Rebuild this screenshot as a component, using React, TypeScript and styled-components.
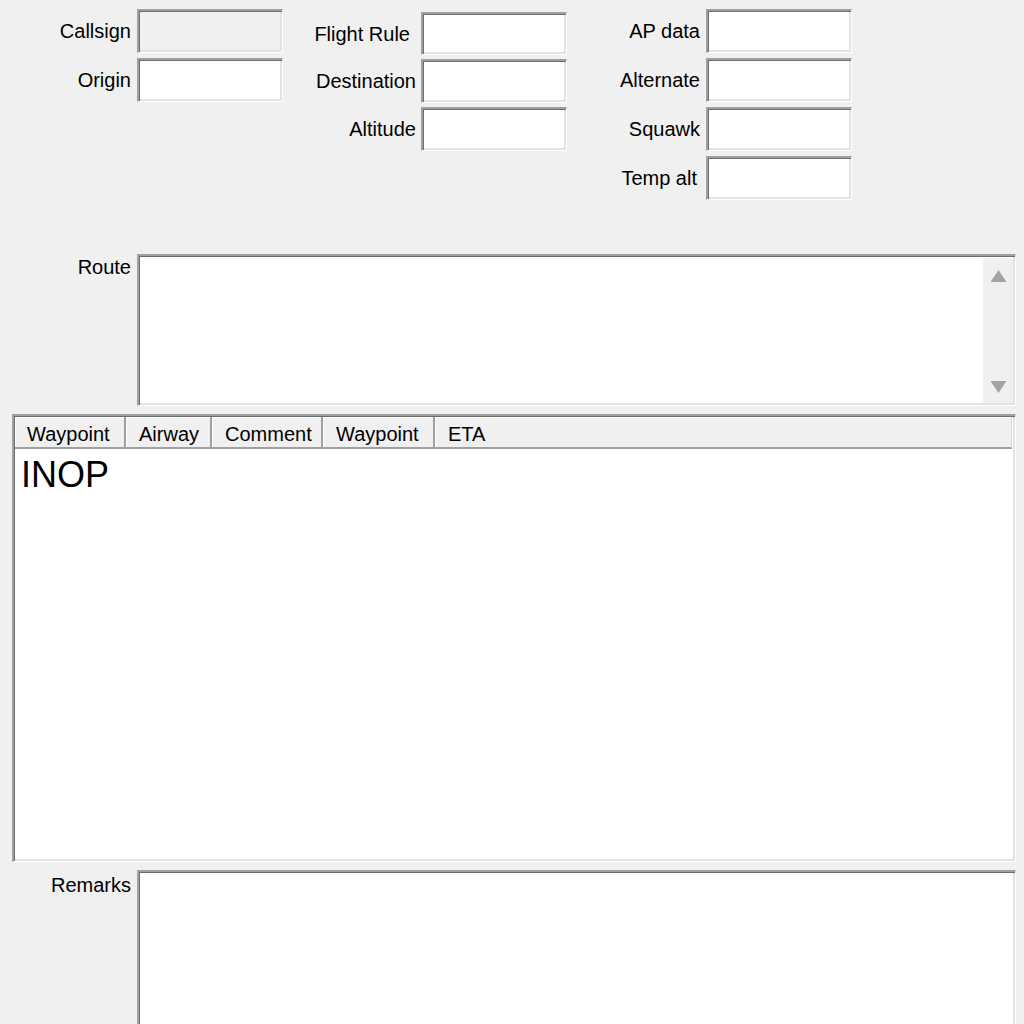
import styled, { createGlobalStyle } from 'styled-components';

const GlobalStyle = createGlobalStyle`
  html, body {
    margin: 0;
    padding: 0;
    background: #f0f0f0;
    overflow: hidden;
  }
  body {
    font-family: "Liberation Sans", Arial, sans-serif;
    color: #000;
  }
`;

type Field = { label: string; disabled?: boolean; trail?: number; height?: number };
type Column = { top: number; labelWidth: number; gap: number; rowGap: number; fields: Field[] };

const COLUMNS: Column[] = [
  {
    top: 9,
    labelWidth: 131,
    gap: 6,
    rowGap: 5,
    fields: [{ label: 'Callsign', disabled: true }, { label: 'Origin' }],
  },
  {
    top: 12,
    labelWidth: 133,
    gap: 5,
    rowGap: 4,
    fields: [
      { label: 'Flight Rule', trail: 6, height: 43 },
      { label: 'Destination' },
      { label: 'Altitude' },
    ],
  },
  {
    top: 9,
    labelWidth: 133,
    gap: 6,
    rowGap: 5,
    fields: [
      { label: 'AP data' },
      { label: 'Alternate' },
      { label: 'Squawk' },
      { label: 'Temp alt', trail: 3 },
    ],
  },
];

const HEADERS = [
  { title: 'Waypoint', width: 111 },
  { title: 'Airway', width: 86 },
  { title: 'Comment', width: 111 },
  { title: 'Waypoint', width: 112 },
  { title: 'ETA', width: 0 },
];

const App = () => {
  return (
    <Page>
      <GlobalStyle />
      <TopFields>
        {COLUMNS.map((col, i) => (
          <FieldColumn key={i} $top={col.top} $rowGap={col.rowGap}>
            {col.fields.map(f => (
              <FieldRow key={f.label} $labelWidth={col.labelWidth} $gap={col.gap} $height={f.height ?? 44}>
                <Label $trail={f.trail ?? 0}>{f.label}</Label>
                <Input $disabled={f.disabled} />
              </FieldRow>
            ))}
          </FieldColumn>
        ))}
      </TopFields>

      <AreaRow $height={152}>
        <AreaLabel $offset={2}>Route</AreaLabel>
        <TextArea>
          <TextBody />
          <ScrollTrack>
            <Arrow viewBox="0 0 16 12">
              <polygon points="8,0 16,12 0,12" />
            </Arrow>
            <Arrow viewBox="0 0 16 12">
              <polygon points="0,0 16,0 8,12" />
            </Arrow>
          </ScrollTrack>
        </TextArea>
      </AreaRow>

      <ListBox>
        <HeaderRow>
          {HEADERS.map((h, i) => (
            <HeaderCell key={i} $width={h.width}>
              {h.title}
            </HeaderCell>
          ))}
        </HeaderRow>
        <ListBody>INOP</ListBody>
      </ListBox>

      <AreaRow $height={170}>
        <AreaLabel $offset={4}>Remarks</AreaLabel>
        <TextArea>
          <TextBody />
        </TextArea>
      </AreaRow>
    </Page>
  );
};

const Page = styled.div`
  display: flex;
  flex-direction: column;
  gap: 8px;
  width: 1016px;
  height: 1024px;
`;

const TopFields = styled.div`
  display: flex;
  height: 246px;
  flex-shrink: 0;
`;

const FieldColumn = styled.div<{ $top: number; $rowGap: number }>`
  display: flex;
  flex-direction: column;
  gap: ${p => p.$rowGap}px;
  padding-top: ${p => p.$top}px;
`;

const FieldRow = styled.div<{ $labelWidth: number; $gap: number; $height: number }>`
  display: grid;
  grid-template-columns: ${p => p.$labelWidth}px 146px;
  column-gap: ${p => p.$gap}px;
  align-items: center;
  height: ${p => p.$height}px;
`;

const Label = styled.span<{ $trail: number }>`
  font-size: 20px;
  line-height: 23px;
  text-align: right;
  white-space: nowrap;
  padding-right: ${p => p.$trail}px;
  margin-top: 1px;
`;

const sunken = `
  box-sizing: border-box;
  border-style: solid;
  border-width: 2px 1px 1px 2px;
  border-color: #a0a0a0 #ffffff #ffffff #a0a0a0;
  box-shadow: inset 1px 1px 0 #6d6d6d, inset -2px -2px 0 #e3e3e3;
`;

const Input = styled.div<{ $disabled?: boolean }>`
  ${sunken}
  height: 100%;
  background: ${p => (p.$disabled ? '#f0f0f0' : '#ffffff')};
`;

const AreaRow = styled.div<{ $height: number }>`
  display: grid;
  grid-template-columns: 131px 1fr;
  column-gap: 6px;
  height: ${p => p.$height}px;
  flex-shrink: 0;
`;

const AreaLabel = styled.span<{ $offset: number }>`
  font-size: 20px;
  line-height: 23px;
  text-align: right;
  padding-top: ${p => p.$offset}px;
`;

const TextArea = styled.div`
  ${sunken}
  display: flex;
  background: #ffffff;
  padding: 2px;
`;

const TextBody = styled.div`
  flex: 1;
`;

const ScrollTrack = styled.div`
  width: 30px;
  background: #f0f0f0;
  display: flex;
  flex-direction: column;
  justify-content: space-between;
  align-items: center;
  padding: 12px 0 10px;
`;

const Arrow = styled.svg`
  width: 17px;
  height: 12px;
  fill: #a3a3a3;
`;

const ListBox = styled.div`
  ${sunken}
  margin-left: 12px;
  height: 448px;
  flex-shrink: 0;
  background: #ffffff;
  display: flex;
  flex-direction: column;
  padding: 1px 3px 0 1px;
`;

const HeaderRow = styled.div`
  display: flex;
  height: 32px;
  box-sizing: border-box;
  background: #f0f0f0;
  border-bottom: 2px solid #a0a0a0;
  border-right: 1px solid #d8d8d8;
`;

const HeaderCell = styled.div<{ $width: number }>`
  box-sizing: border-box;
  ${p => (p.$width ? `width: ${p.$width}px; border-right: 2px solid #a0a0a0;` : 'flex: 1;')}
  padding: 5px 0 0 13px;
  font-size: 20px;
  line-height: 25px;
  white-space: nowrap;
  box-shadow: inset 1px 1px 0 #ffffff;

  &:first-child {
    padding-left: 12px;
  }
`;

const ListBody = styled.div`
  padding: 5px 0 0 6px;
  font-size: 36px;
  line-height: 41px;
`;

export default App;
